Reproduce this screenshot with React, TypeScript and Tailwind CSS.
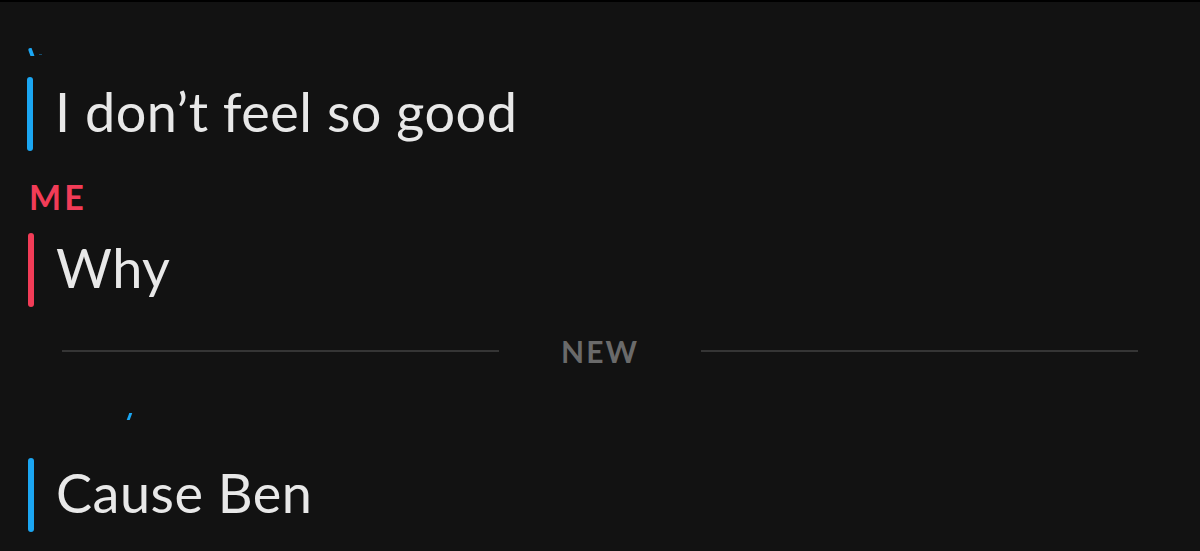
export default function App() {
  return (
    <div className="w-[1200px] h-[551px] bg-[#121212] overflow-hidden flex flex-col" style={{ fontFamily: 'Lato, "Noto Sans", sans-serif' }}>
      <div className="h-[2px] bg-black shrink-0" />
      {/* cropped sender label remnant */}
      <div className="h-[54px] shrink-0 flex items-end pl-[29px]">
        <div className="w-[4px] h-[8px] bg-[#1ba6f2] rounded-tl-[3px] skew-x-[20deg]" />
        <div className="w-[3px] h-[1px] bg-[#1ba6f2]/40 ml-[6px] mb-[1px]" />
      </div>
      <div className="h-[21px] shrink-0" />
      {/* message 1 */}
      <div className="flex items-stretch pl-[27px] h-[74px] shrink-0">
        <div className="w-[6px] rounded-full bg-[#1ba6f2]" />
        <div className="ml-[22px] text-[54px] leading-[70px] tracking-[0.5px] text-[#e8e8e8]">I don’t feel so good</div>
      </div>
      <div className="h-[31px] shrink-0" />
      <div className="pl-[29px] h-[30px] shrink-0 text-[34px] leading-[30px] font-bold tracking-[3px] text-[#f23c57]">ME</div>
      <div className="h-[21px] shrink-0" />
      {/* message 2 */}
      <div className="flex items-stretch pl-[28px] h-[74px] shrink-0">
        <div className="w-[6px] rounded-full bg-[#f23c57]" />
        <div className="ml-[22px] text-[54px] leading-[70px] tracking-[0.5px] text-[#e8e8e8]">Why</div>
      </div>
      {/* divider */}
      <div className="h-[88px] shrink-0 flex items-center px-[62px]">
        <div className="flex-1 h-[2px] bg-[#353535]" />
        <div className="mx-[62px] text-[30px] font-bold tracking-[2px] text-[#6a6a6a] leading-none">NEW</div>
        <div className="flex-1 h-[2px] bg-[#353535]" />
      </div>
      {/* cropped sender label remnant */}
      <div className="h-[25px] shrink-0 flex items-end pl-[128px]">
        <div className="w-[3px] h-[7px] bg-[#1ba6f2] skew-x-[-20deg]" />
      </div>
      <div className="h-[38px] shrink-0" />
      {/* message 3 */}
      <div className="flex items-stretch pl-[28px] h-[74px] shrink-0">
        <div className="w-[6px] rounded-full bg-[#1ba6f2]" />
        <div className="ml-[22px] text-[54px] leading-[70px] tracking-[0.5px] text-[#e8e8e8]">Cause Ben</div>
      </div>
    </div>
  );
}
